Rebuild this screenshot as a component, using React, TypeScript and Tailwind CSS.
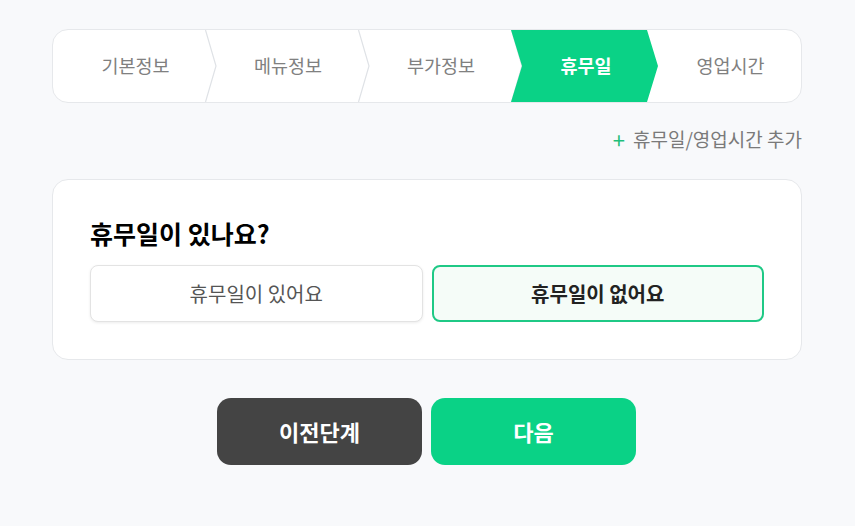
import { useState } from 'react'

const steps = ['기본정보', '메뉴정보', '부가정보', '휴무일', '영업시간']
const active = 3

function Chevron() {
  return (
    <svg
      className="absolute left-full top-0 z-0"
      width="12"
      height="72"
      viewBox="0 0 12 72"
      fill="none"
    >
      <path d="M0.5 0 L11 36 L0.5 72" stroke="#dfe2e6" strokeWidth="1.2" />
    </svg>
  )
}

export default function App() {
  const [hasHoliday, setHasHoliday] = useState(false)

  return (
    <div
      className="min-h-screen bg-[#f8f9fb] pt-[29px]"
      style={{ fontFamily: '"Noto Sans CJK KR", "Noto Sans", sans-serif' }}
    >
      <div className="ml-[52px] w-[750px]">
        {/* Stepper */}
        <div className="flex h-[74px] overflow-hidden rounded-2xl border border-[#e6e8eb] bg-white">
          {steps.map((label, i) => {
            if (i === active) {
              return (
                <div
                  key={label}
                  className="relative z-10 -mr-[11px] flex w-[147px] shrink-0 items-center justify-center pl-[3px] bg-[#0ad286] text-[18.5px] font-bold text-white [clip-path:polygon(0_0,calc(100%-11px)_0,100%_50%,calc(100%-11px)_100%,0_100%,11px_50%)]"
                >
                  {label}
                </div>
              )
            }
            const isLast = i === steps.length - 1
            return (
              <div
                key={label}
                className={`relative flex items-center justify-center pl-[13px] text-[18.5px] text-[#808080] ${
                  isLast ? 'flex-1' : i === 0 ? 'w-[152px] shrink-0' : 'w-[153px] shrink-0'
                }`}
              >
                <span className="relative z-10">{label}</span>
                {!isLast && <Chevron />}
              </div>
            )
          })}
        </div>

        {/* Add link */}
        <div className="mt-[24px] flex justify-end">
          <button className="flex items-center gap-[8px] text-[19px] leading-[24px] text-[#7a7a7a]">
            <span className="text-[22px] leading-none text-[#1fbf7a]">+</span>
            휴무일/영업시간 추가
          </button>
        </div>

        {/* Question card */}
        <div className="mt-[28px] rounded-2xl border border-[#e6e8eb] bg-white px-[37px] pb-[37px] pt-[38px]">
          <h2 className="text-[25px] font-bold leading-[30px] text-black">휴무일이 있나요?</h2>
          <div className="mt-[17px] grid grid-cols-2 gap-[9px]">
            <button
              onClick={() => setHasHoliday(true)}
              className={`h-[57px] rounded-lg text-[20px] ${
                hasHoliday
                  ? 'border-2 border-[#1fc986] bg-[#f5fcf8] font-bold text-[#222]'
                  : 'border border-[#e3e3e3] bg-white text-[#555] shadow-[0_1px_3px_rgba(0,0,0,0.08)]'
              }`}
            >
              휴무일이 있어요
            </button>
            <button
              onClick={() => setHasHoliday(false)}
              className={`h-[57px] rounded-lg text-[20px] ${
                !hasHoliday
                  ? 'border-2 border-[#1fc986] bg-[#f5fcf8] font-bold text-[#222]'
                  : 'border border-[#e3e3e3] bg-white text-[#555] shadow-[0_1px_3px_rgba(0,0,0,0.08)]'
              }`}
            >
              휴무일이 없어요
            </button>
          </div>
        </div>

        {/* Actions */}
        <div className="mt-[38px] flex gap-[9px] pl-[165px]">
          <button className="h-[67px] w-[205px] rounded-[14px] bg-[#444444] text-[22px] font-bold text-white">
            이전단계
          </button>
          <button className="h-[67px] w-[205px] rounded-[14px] bg-[#0ad286] text-[22px] font-bold text-white">
            다음
          </button>
        </div>
      </div>
    </div>
  )
}
